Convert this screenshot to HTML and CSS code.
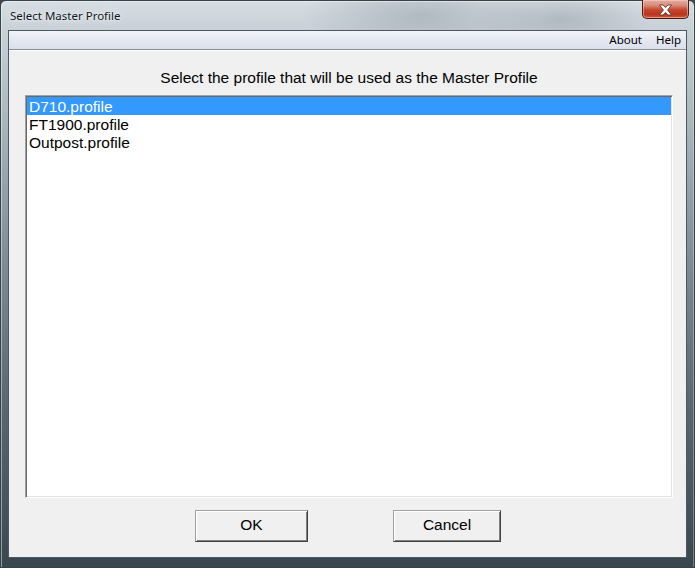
FILE: index.html
```html
<!DOCTYPE html>
<html>
<head>
<meta charset="utf-8">
<link rel="stylesheet" href="styles.css">
</head>
<body>
<div class="window">
  <div class="titlebar">
    <span class="title">Select Master Profile</span>
    <div class="close">
      <svg width="15" height="12" viewBox="0 0 15 12">
        <path d="M1.5 1 H5 L7.5 3.6 L10 1 H13.5 L9.6 6 L13.5 11 H10 L7.5 8.4 L5 11 H1.5 L5.4 6 Z" fill="#fff" stroke="#5a3a34" stroke-width="0.9" stroke-linejoin="round"/>
      </svg>
    </div>
  </div>
  <div class="client">
    <div class="menubar">
      <span class="menu-item">About</span>
      <span class="menu-item">Help</span>
    </div>
    <div class="content">
      <div class="prompt">Select the profile that will be used as the Master Profile</div>
      <div class="listbox">
        <div class="row selected">D710.profile</div>
        <div class="row">FT1900.profile</div>
        <div class="row">Outpost.profile</div>
      </div>
      <div class="buttons">
        <div class="btn btn-ok">OK</div>
        <div class="btn btn-cancel">Cancel</div>
      </div>
    </div>
  </div>
</div>
</body>
</html>
```

FILE: styles.css
```css
html, body {
  margin: 0;
  padding: 0;
  width: 695px;
  height: 568px;
  overflow: hidden;
  background: #3a474f;
}

.window {
  box-sizing: border-box;
  width: 695px;
  height: 568px;
  border: 1px solid #35434b;
  border-radius: 6px 6px 0 0;
  padding: 0 7px 9px 7px;
  display: flex;
  flex-direction: column;
  background:
    radial-gradient(ellipse 120px 40px at 420px 14px, rgba(120,130,140,0.35), rgba(120,130,140,0) 100%),
    radial-gradient(ellipse 90px 30px at 560px 18px, rgba(110,120,130,0.3), rgba(110,120,130,0) 100%),
    linear-gradient(180deg, #d6dde3 0px, #c9d1d8 28px, #aab5bc 120px, #7f8c94 260px, #5b6870 400px, #44515a 520px, #3a464e 568px);
  box-shadow: inset 1px 1px 0 rgba(255,255,255,0.45), inset -1px 0 0 rgba(255,255,255,0.3);
}

.titlebar {
  height: 29px;
  flex: none;
  position: relative;
  display: flex;
  align-items: flex-start;
}

.title {
  font-family: "Noto Sans", sans-serif;
  font-size: 11.5px;
  color: #101820;
  margin-left: 2px;
  margin-top: 7px;
  line-height: 16px;
  text-shadow: 0 0 8px rgba(255,255,255,0.9), 0 0 3px rgba(255,255,255,0.8);
}

.close {
  position: absolute;
  right: -2px;
  top: -1px;
  width: 45px;
  height: 18px;
  border: 1px solid #4a1e14;
  border-top: none;
  border-radius: 0 0 5px 5px;
  background: linear-gradient(180deg, #e3b0a4 0%, #d88a78 30%, #c8452c 55%, #b8361d 80%, #d05a3c 100%);
  box-shadow: inset 0 0 0 1px rgba(255,210,200,0.5);
  display: flex;
  align-items: center;
  justify-content: center;
}

.close svg {
  display: block;
  margin-top: 1px;
}

.client {
  flex: 1;
  border: 1px solid #4c5862;
  background: #f0f0f0;
  display: flex;
  flex-direction: column;
}

.menubar {
  height: 18px;
  flex: none;
  background: linear-gradient(180deg, #f2f4f9 0%, #e4e8f1 50%, #dbe0ec 100%);
  border-bottom: 1px solid #8a8c8e;
  display: flex;
  justify-content: flex-end;
  align-items: center;
  padding-right: 5px;
  gap: 14px;
}

.menu-item {
  font-family: "Noto Sans", sans-serif;
  font-size: 11.5px;
  color: #000;
  line-height: 16px;
}

.content {
  flex: 1;
  border-top: 1px solid #ffffff;
  display: flex;
  flex-direction: column;
  padding: 0 13px 0 16px;
}

.prompt {
  font-family: "Liberation Sans", Arial, sans-serif;
  font-size: 15.5px;
  color: #000;
  line-height: 18px;
  text-align: center;
  margin-top: 18px;
  margin-bottom: 8px;
  padding-left: 0;
}

.listbox {
  height: 403px;
  box-sizing: border-box;
  background: #fff;
  border-style: solid;
  border-width: 1px;
  border-color: #a0a0a0 #fff #fff #a0a0a0;
  box-shadow: inset 1px 1px 0 #696969, inset -1px -1px 0 #e3e3e3;
  padding: 1px;
}

.row {
  font-family: "Liberation Sans", Arial, sans-serif;
  font-size: 15.5px;
  line-height: 20px;
  height: 18px;
  overflow: hidden;
  color: #000;
  padding-left: 2px;
}

.row.selected {
  background: #3399ff;
  color: #fff;
}

.buttons {
  display: flex;
  margin-top: 12px;
  padding-left: 170px;
  gap: 85px;
}

.btn {
  box-sizing: border-box;
  height: 32px;
  padding-bottom: 2px;
  font-family: "Liberation Sans", Arial, sans-serif;
  font-size: 15.5px;
  color: #000;
  background: #f0f0f0;
  display: flex;
  align-items: center;
  justify-content: center;
  border-style: solid;
  border-width: 1px;
  border-color: #a0a0a0 #404040 #404040 #a0a0a0;
  box-shadow: inset 1px 1px 0 #fff, inset -1px -1px 0 #808080;
}

.btn-ok {
  width: 113px;
}

.btn-cancel {
  width: 108px;
}
```
